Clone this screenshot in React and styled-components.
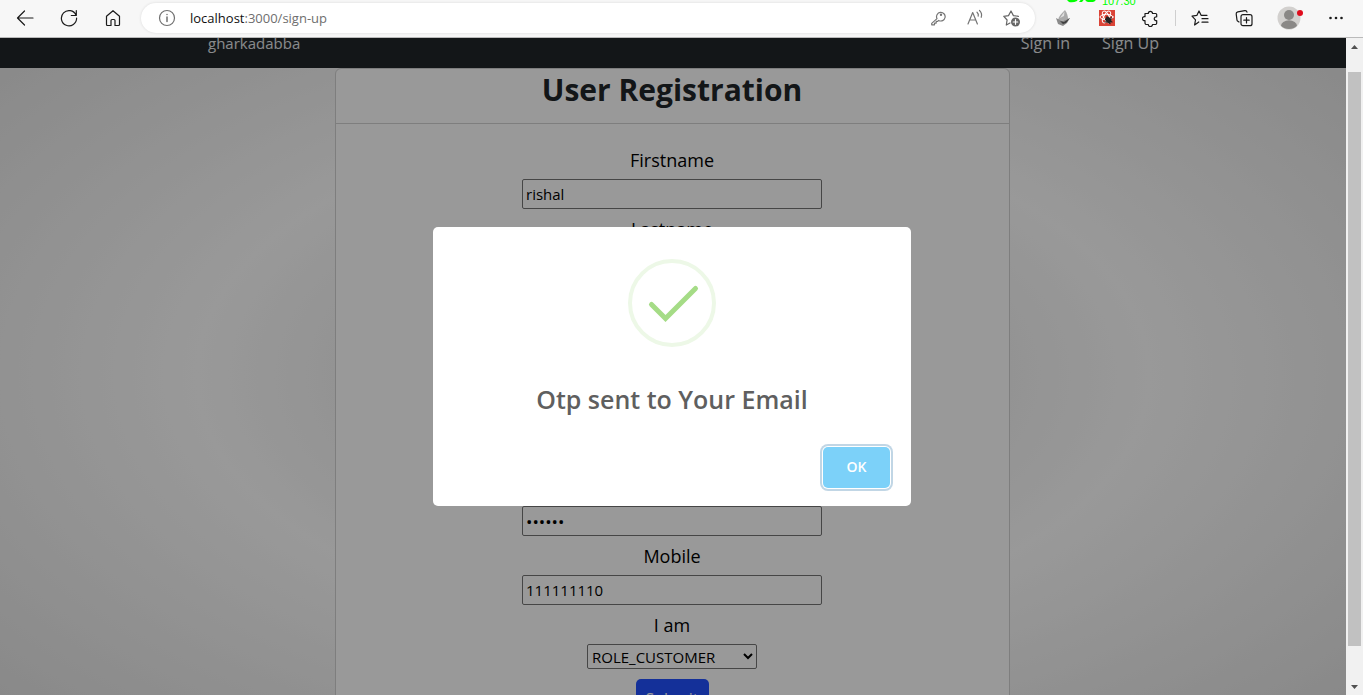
import React from "react";
import styled, { createGlobalStyle } from "styled-components";

const GlobalStyle = createGlobalStyle`
  *, *::before, *::after { box-sizing: border-box; }
  body {
    margin: 0;
    overflow: hidden;
    font-family: "Open Sans", "Noto Sans", sans-serif;
    font-size: 16px;
    color: #000;
  }
`;

const Browser = styled.div`
  display: flex;
  flex-direction: column;
  height: 100vh;
`;

const Toolbar = styled.header`
  position: relative;
  display: flex;
  align-items: center;
  flex: none;
  height: 38px;
  padding: 0 5px 2px 3px;
  background: #f7f7f7;
  border-bottom: 1px solid #bababa;
  overflow: hidden;
`;

const ToolButton = styled.button`
  display: flex;
  align-items: center;
  justify-content: center;
  flex: none;
  width: ${(p) => p.$width || 44}px;
  height: 30px;
  padding: 0;
  border: 0;
  background: transparent;
  color: ${(p) => p.$color || "#1b1b1b"};

  svg {
    fill: none;
    stroke: currentColor;
    stroke-width: 1.2;
    stroke-linecap: round;
    stroke-linejoin: round;
  }
`;

const AddressBar = styled.div`
  display: flex;
  align-items: center;
  flex: 1;
  height: 30px;
  margin: 0 6px;
  padding: 0 5px 0 7px;
  border-radius: 15px;
  background: #fff;
  box-shadow: 0 0 3px rgba(0, 0, 0, 0.12);
`;

const Url = styled.div`
  flex: 1;
  padding-left: 5px;
  font-size: 13px;
  line-height: 20px;
  color: #6e6e6e;
  white-space: nowrap;

  strong {
    font-weight: 400;
    color: #101010;
  }
`;

const Divider = styled.span`
  width: 1px;
  height: 16px;
  margin: 0 2px;
  background: #cfcfcf;
`;

const FrameCounter = styled.div`
  position: absolute;
  top: -7px;
  left: 1065px;
  display: flex;
  gap: 4px;
  color: #0f0;
  font: 11px/17px "Liberation Sans", sans-serif;
`;

const Viewport = styled.div`
  display: flex;
  flex: 1;
  min-height: 0;
`;

const Page = styled.div`
  position: relative;
  flex: 1;
  overflow: hidden;
  background: radial-gradient(ellipse at center, #e0e0e0 0%, #fff 50%, #e2e2e2 100%) 0 -20px / 100% calc(100% + 57px) no-repeat;
`;

const Navbar = styled.nav`
  display: flex;
  justify-content: space-between;
  height: 30px;
  padding: 0 187px 0 208px;
  background: #212529;
`;

const NavLinks = styled.div`
  display: flex;
  gap: 32px;
`;

const NavLink = styled.a`
  font-size: ${(p) => (p.$brand ? 15 : 16)}px;
  line-height: 10px;
  color: #e4e7ea;
  text-decoration: none;
`;

const Content = styled.main`
  padding-right: 2px;
`;

const Card = styled.div`
  width: calc(50% + 3px);
  margin: 0 auto;
  border: 1px solid #d2d2d2;
  border-radius: 6px;
  background: #fff;
`;

const CardHeader = styled.div`
  height: 55px;
  border-bottom: 1px solid #d2d2d2;
  text-align: center;
`;

const Title = styled.h1`
  margin: 0;
  font-size: 30px;
  font-weight: 700;
  line-height: 42px;
  color: #212529;
`;

const Form = styled.form`
  display: flex;
  flex-direction: column;
  align-items: center;
  padding: 16px 16px 24px;
`;

const Label = styled.label`
  padding-top: 2px;
  font-size: 18px;
  line-height: 37px;
`;

const TextInput = styled.input`
  width: 300px;
  height: 30px;
  padding: 1px 3px;
  border: 1px solid #767676;
  border-radius: 2px;
  background: #fff;
  font: inherit;
  font-size: 15px;

  &[type="password"] {
    font-size: 17px;
  }
`;

const FormMessage = styled.div`
  min-height: 120px;
`;

const RoleSelect = styled.select`
  width: 170px;
  height: 25px;
  border: 1px solid #767676;
  border-radius: 2px;
  background: #fff;
  color: #000;
  font: inherit;
  font-size: 15px;
`;

const SubmitButton = styled.button`
  margin-top: 10px;
  width: 73px;
  height: 38px;
  padding: 2px 0 0;
  border: 0;
  border-radius: 5px;
  background: #2250ff;
  color: #fff;
  font: inherit;
`;

const Backdrop = styled.div`
  position: absolute;
  inset: 0;
  display: flex;
  align-items: center;
  justify-content: center;
  padding-right: 2px;
  background: rgba(0, 0, 0, 0.4);
`;

const Dialog = styled.section`
  display: flex;
  flex-direction: column;
  align-items: center;
  width: 478px;
  padding-top: 32px;
  border-radius: 5px;
  background: #fff;
`;

const DialogTitle = styled.h2`
  margin: 32px 0 0;
  font-size: 25px;
  font-weight: 600;
  line-height: 40px;
  color: #5f5f5f;
`;

const DialogFooter = styled.div`
  display: flex;
  justify-content: flex-end;
  width: 100%;
  padding: 28px 21px 18px;
`;

const OkButton = styled.button`
  width: 67px;
  height: 41px;
  padding: 0 0 2px;
  border: 0;
  border-radius: 5px;
  background: #7cd1f9;
  box-shadow: 0 0 0 1px #fff, 0 0 0 3px rgba(43, 114, 165, 0.29);
  color: #fff;
  font: inherit;
  font-size: 14px;
  font-weight: 600;
`;

const Scrollbar = styled.div`
  display: flex;
  flex-direction: column;
  align-items: center;
  flex: none;
  width: 17px;
  background: #f1f1f1;
`;

const ScrollArrow = styled.span`
  display: flex;
  align-items: center;
  justify-content: center;
  height: 17px;
`;

const ScrollSpace = styled.span`
  flex: ${(p) => p.$share};
`;

const ScrollThumb = styled.span`
  flex: 574;
  width: 13px;
  background: #c1c1c1;
`;

function Field({ id, label, ...input }) {
  return (
    <>
      <Label htmlFor={id}>{label}</Label>
      <TextInput id={id} {...input} />
    </>
  );
}

function BrowserToolbar() {
  return (
    <Toolbar>
      <ToolButton aria-label="Back">
        <svg width="18" height="18" viewBox="0 0 18 18">
          <path d="M17 9H1.5M8.5 2L1.5 9l7 7" />
        </svg>
      </ToolButton>
      <ToolButton aria-label="Refresh">
        <svg width="18" height="18" viewBox="0 0 18 18">
          <path d="M16 6.2A7.6 7.6 0 1 0 16.6 9M16.3 1.5v5h-5" />
        </svg>
      </ToolButton>
      <ToolButton aria-label="Home">
        <svg width="18" height="18" viewBox="0 0 18 18">
          <path d="M2.5 7.3L9 1.7l6.5 5.6v8.2a1 1 0 0 1-1 1H11v-5a1 1 0 0 0-1-1H8a1 1 0 0 0-1 1v5H3.5a1 1 0 0 1-1-1z" />
        </svg>
      </ToolButton>

      <AddressBar>
        <ToolButton $width={37} $color="#707070" aria-label="Site information">
          <svg width="18" height="18" viewBox="0 0 18 18">
            <circle cx="9" cy="9" r="7.5" />
            <path d="M9 8v4.5M9 5.4v.2" strokeWidth="1.5" />
          </svg>
        </ToolButton>
        <Url role="textbox" aria-label="Address" tabIndex={0}>
          <strong>localhost</strong>:3000/sign-up
        </Url>
        <ToolButton $width={37} $color="#757575" aria-label="Saved passwords">
          <svg width="16" height="16" viewBox="0 0 16 16">
            <path d="M7 8.6L1.7 13.4v1.4h2.8v-1.7h1.7v-1.7h1.5l1-1A4.3 4.3 0 1 0 7 8.6z" />
            <circle cx="11" cy="4.8" r=".6" />
          </svg>
        </ToolButton>
        <ToolButton $width={37} $color="#757575" aria-label="Read aloud">
          <svg width="18" height="18" viewBox="0 0 18 18">
            <path d="M2 15L6.7 3.5 11.4 15M3.6 11h6.2M11 3.2a4 4 0 0 1 1.2 4M13.5 1.5a6.5 6.5 0 0 1 1.7 6.8" />
          </svg>
        </ToolButton>
        <ToolButton $width={37} $color="#666" aria-label="Add to favorites">
          <svg width="18" height="18" viewBox="0 0 18 18">
            <path d="M7 14l-3.7 2 .8-5L.8 7.3l4.7-.7L8 2l2.4 4.6 5 .7" />
            <circle cx="12.5" cy="13" r="4.5" style={{ fill: "#666", stroke: "none" }} />
            <path d="M12.5 10.7v4.6M10.2 13h4.6" stroke="#fff" />
          </svg>
        </ToolButton>
      </AddressBar>

      <ToolButton aria-label="Download extension">
        <svg width="16" height="18" viewBox="0 0 16 18">
          <path d="M10 1C6 5 4 7 3 11l4 1 6-2c0-3-1-6-3-9z" fill="#a9a9a9" stroke="none" />
          <path d="M9.500 2.500L5 9l4-2z" fill="#dedede" stroke="none" />
          <path d="M1 9l6 3 8-3-3 5-4 3-5-2z" fill="#8a8a8a" stroke="none" />
          <path d="M5 12l4 1 6-4-4 5-3 1z" fill="#3f3f3f" stroke="none" />
        </svg>
      </ToolButton>
      <ToolButton aria-label="React developer tools">
        <svg width="16" height="16" viewBox="0 0 16 16">
          <path d="M0 0h16v16H0z" fill="#db4437" stroke="none" />
          <g stroke="#fff" strokeWidth="1">
            <ellipse cx="7.5" cy="7" rx="6.5" ry="2.7" />
            <ellipse cx="7.5" cy="7" rx="6.5" ry="2.7" transform="rotate(60 7.5 7)" />
            <ellipse cx="7.5" cy="7" rx="6.5" ry="2.7" transform="rotate(120 7.5 7)" />
          </g>
          <path d="M6.5 9.5l4.5 4M8 6.5v2M12 7v2M6 12h2M11 11l2 1" stroke="#222" />
          <ellipse cx="9.5" cy="10" rx="2.5" ry="3.5" transform="rotate(-35 9.5 10)" fill="#222" stroke="none" />
        </svg>
      </ToolButton>
      <ToolButton aria-label="Extensions">
        <svg width="18" height="18" viewBox="0 0 18 18">
          <path d="M3 4.5h3.3a2.1 2.1 0 1 1 4.2 0h3.2a1 1 0 0 1 1 1v2.3a2 2 0 1 0 0 3.9V14a1.5 1.5 0 0 1-1.5 1.5h-2.7a2.1 2.1 0 0 1-4.2 0H4.500A1.5 1.5 0 0 1 3 14v-2.5a2 2 0 1 1 0-3.8z" />
        </svg>
      </ToolButton>
      <Divider />
      <ToolButton aria-label="Favorites">
        <svg width="18" height="18" viewBox="0 0 18 18">
          <path d="M7.8 13l-4.2 3 .9-5.2L1 7.2l4.8-.8L8 2l2.1 4.3H16M11 9.7h6M11 13.2h6" />
        </svg>
      </ToolButton>
      <ToolButton aria-label="Collections">
        <svg width="18" height="18" viewBox="0 0 18 18">
          <path d="M4 13l-1.1-.7a2 2 0 0 1-.9-1.2L1.2 5a2 2 0 0 1 1.6-2.2l7-1.2A2 2 0 0 1 12 3.2" />
          <rect x="6" y="5.7" width="11" height="11" rx="2" />
          <path d="M11.5 8.5v5.4M8.8 11.2h5.4" />
        </svg>
      </ToolButton>
      <ToolButton $width={48} aria-label="Profile">
        <svg width="26" height="24" viewBox="0 0 26 24">
          <g stroke="none">
            <circle cx="12" cy="12" r="11.5" fill="#d2d0ce" />
            <circle cx="12" cy="9" r="5" fill="#8a8886" />
            <path d="M4 19.8a8 5.5 0 0 1 16 0 11.5 11.5 0 0 1-16 0z" fill="#8a8886" />
            <circle cx="23" cy="7" r="3" fill="#e00b1c" />
          </g>
        </svg>
      </ToolButton>
      <ToolButton aria-label="Settings and more">
        <svg width="16" height="4" viewBox="0 0 16 4">
          <g fill="#1b1b1b" stroke="none">
            <circle cx="2.5" cy="2" r="1.3" />
            <circle cx="8" cy="2" r="1.3" />
            <circle cx="13.5" cy="2" r="1.3" />
          </g>
        </svg>
      </ToolButton>

      <FrameCounter>
        <svg width="33" height="10" viewBox="0 0 33 10" fill="#0f0">
          <path d="M1 6h12l-1 2q-4 2-8 1zM14 9l4-5h3l-4 5zM20 6h11q0 2-3 3h-5q-3-1-3-3z" />
        </svg>
        107.30
      </FrameCounter>
    </Toolbar>
  );
}

function SuccessDialog() {
  return (
    <Backdrop>
      <Dialog role="dialog" aria-modal="true" aria-labelledby="dialog-title">
        <svg width="88" height="88" viewBox="0 0 88 88" fill="none">
          <circle cx="44" cy="44" r="42" stroke="#edf8e7" strokeWidth="4" />
          <path d="M23.5 45.5L37.5 59.5 67.5 29.5" stroke="#a5dc86" strokeWidth="5" strokeLinecap="round" />
        </svg>
        <DialogTitle id="dialog-title">Otp sent to Your Email</DialogTitle>
        <DialogFooter>
          <OkButton type="button">OK</OkButton>
        </DialogFooter>
      </Dialog>
    </Backdrop>
  );
}

export default function App() {
  return (
    <Browser>
      <GlobalStyle />
      <BrowserToolbar />
      <Viewport>
        <Page>
          <Navbar>
            <NavLink $brand href="#home">gharkadabba</NavLink>
            <NavLinks>
              <NavLink href="#sign-in">Sign in</NavLink>
              <NavLink href="#sign-up">Sign Up</NavLink>
            </NavLinks>
          </Navbar>
          <Content>
            <Card>
              <CardHeader>
                <Title>User Registration</Title>
              </CardHeader>
              <Form onSubmit={(e) => e.preventDefault()}>
                <Field id="firstname" label="Firstname" defaultValue="rishal" />
                <Field id="lastname" label="Lastname" />
                <Field id="email" label="Email" type="email" />
                <FormMessage />
                <Field id="password" label="Password" type="password" defaultValue="secret" />
                <Field id="mobile" label="Mobile" defaultValue="111111110" />
                <Label htmlFor="role">I am</Label>
                <RoleSelect id="role" defaultValue="ROLE_CUSTOMER">
                  <option>ROLE_CUSTOMER</option>
                </RoleSelect>
                <SubmitButton type="submit">Submit</SubmitButton>
              </Form>
            </Card>
          </Content>
          <SuccessDialog />
        </Page>
        <Scrollbar aria-hidden="true">
          <ScrollArrow>
            <svg width="7" height="4" viewBox="0 0 7 4" fill="#505050">
              <path d="M0 4l3.5-4L7 4z" />
            </svg>
          </ScrollArrow>
          <ScrollSpace $share={17} />
          <ScrollThumb />
          <ScrollSpace $share={32} />
          <ScrollArrow>
            <svg width="7" height="4" viewBox="0 0 7 4" fill="#505050">
              <path d="M0 0l3.5 4L7 0z" />
            </svg>
          </ScrollArrow>
        </Scrollbar>
      </Viewport>
    </Browser>
  );
}
